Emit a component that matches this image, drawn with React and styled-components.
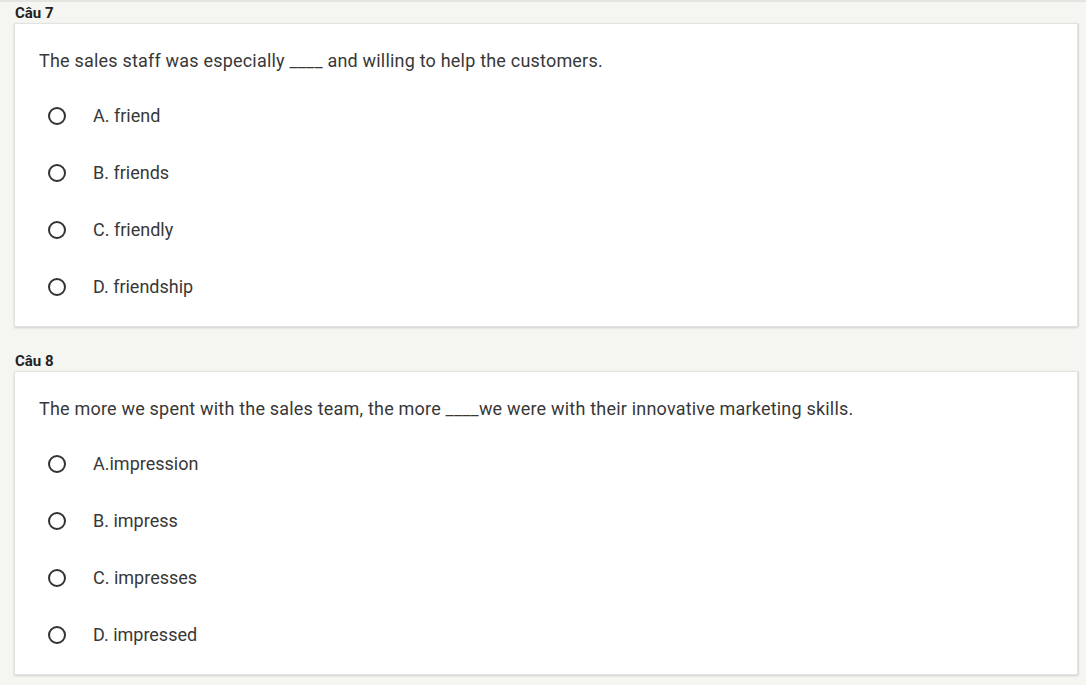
import React from "react";
import styled, { createGlobalStyle } from "styled-components";

const GlobalStyle = createGlobalStyle`
  html, body {
    margin: 0;
    padding: 0;
    background: #f5f5f2;
  }
  body {
    font-family: Roboto, "Liberation Sans", Arial, sans-serif;
    color: #333;
  }
`;

const Page = styled.div`
  padding: 2px 8px 10px 14px;
  border-top: 2px solid #e4e4e1;
`;

const Block = styled.section`
  margin-bottom: 25px;
`;

const Label = styled.div`
  font-size: 15px;
  font-weight: 700;
  line-height: 18px;
  color: #222;
  padding-left: 1px;
  margin-bottom: 1px;
`;

const Card = styled.div`
  background: #fff;
  border: 1px solid #e2e2e0;
  box-shadow: 0 1px 2px rgba(0, 0, 0, 0.15), 1px 0 1px rgba(0, 0, 0, 0.06);
  padding: 25px 24px 11px 24px;
`;

const Question = styled.div`
  font-size: 18px;
  line-height: 24px;
  letter-spacing: 0.2px;
  color: #383838;
  margin-bottom: 14px;
`;

const Option = styled.label`
  display: flex;
  align-items: center;
  height: 57px;
  padding-left: 9px;
  font-size: 18px;
  color: #383838;
  cursor: pointer;
`;

const Radio = styled.span`
  width: 14px;
  height: 14px;
  border: 2px solid #333;
  border-radius: 50%;
  margin-right: 27px;
  flex-shrink: 0;
`;

const questions = [
  {
    label: "Câu 7",
    text: "The sales staff was especially ____ and willing to help the customers.",
    options: ["A. friend", "B. friends", "C. friendly", "D. friendship"],
  },
  {
    label: "Câu 8",
    text: "The more we spent with the sales team, the more ____we were with their innovative marketing skills.",
    options: ["A.impression", "B. impress", "C. impresses", "D. impressed"],
  },
];

const App = () => {
  return (
    <Page>
      <GlobalStyle />
      {questions.map((q) => (
        <Block key={q.label}>
          <Label>{q.label}</Label>
          <Card>
            <Question>{q.text}</Question>
            {q.options.map((opt) => (
              <Option key={opt}>
                <Radio />
                {opt}
              </Option>
            ))}
          </Card>
        </Block>
      ))}
    </Page>
  );
};

export default App;
